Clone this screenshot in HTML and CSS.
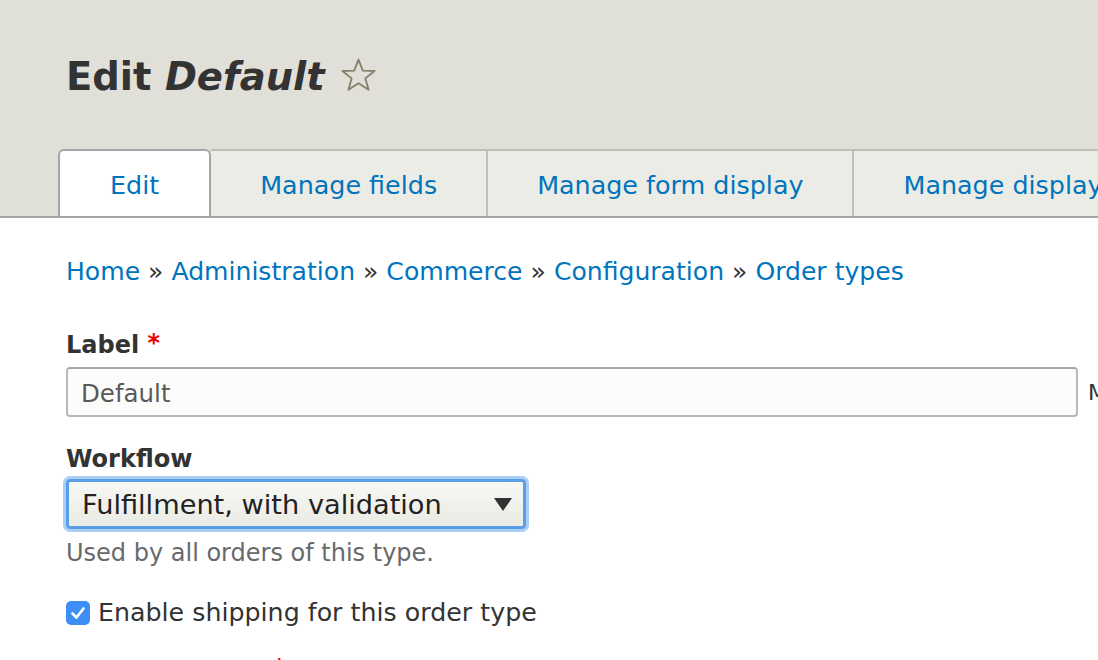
FILE: index.html
```html
<!DOCTYPE html>
<html>
<head>
<meta charset="utf-8">
<link rel="stylesheet" href="styles.css">
</head>
<body>
<div class="header">
  <h1 class="title">Edit <em>Default</em><svg class="star" viewBox="0 0 36 36" width="37" height="37"><path d="M18 2.5 L22.2 13.2 L33.6 13.6 L24.7 20.8 L27.8 31.9 L18 25.6 L8.2 31.9 L11.3 20.8 L2.4 13.6 L13.8 13.2 Z" fill="none" stroke="#868269" stroke-width="1.8" stroke-linejoin="round"/></svg></h1>
  <ul class="tabs">
    <li class="tab active"><a>Edit</a></li>
    <li class="tab"><a>Manage fields</a></li>
    <li class="tab"><a>Manage form display</a></li>
    <li class="tab"><a>Manage display</a></li>
  </ul>
</div>
<div class="content">
  <nav class="breadcrumb"><a>Home</a> » <a>Administration</a> » <a>Commerce</a> » <a>Configuration</a> » <a>Order types</a></nav>
  <div class="field">
    <label class="label">Label <span class="req">*</span></label>
    <div class="input-row">
      <div class="input">Default</div>
      <span class="machine">Machine name: default</span>
    </div>
  </div>
  <div class="field">
    <label class="label">Workflow</label>
    <div class="select">
      <span>Fulfillment, with validation</span>
      <svg class="arrow" viewBox="0 0 18 13" width="18" height="13"><path d="M0 0 H18 L9 13 Z" fill="#333"/></svg>
    </div>
    <div class="desc">Used by all orders of this type.</div>
  </div>
  <div class="check-row">
    <span class="checkbox"><svg viewBox="0 0 24 24" width="24" height="24"><path d="M6.5 12.5 L10.5 16.5 L17.5 7.5" fill="none" stroke="#fff" stroke-width="2.6" stroke-linecap="round" stroke-linejoin="round"/></svg></span>
    <span class="check-label">Enable shipping for this order type</span>
  </div>
  <div class="field last">
    <label class="label">Shipment type <span class="req">*</span></label>
  </div>
</div>
</body>
</html>
```

FILE: styles.css
```css
html, body {
  margin: 0;
  padding: 0;
  background: #fff;
  overflow: hidden;
}
body {
  font-family: "DejaVu Sans", "Liberation Sans", sans-serif;
  color: #333;
  width: 1098px;
  height: 660px;
}
.header {
  background: #e0e0d8;
  padding-top: 52px;
}
.title {
  margin: 0 0 0 66px;
  font-size: 38.5px;
  font-weight: bold;
  color: #333;
  line-height: 48px;
  height: 49px;
  display: flex;
  align-items: center;
  white-space: pre;
}
.title em {
  font-style: italic;
}
.star {
  margin-left: 15px;
  margin-top: -2px;
}
.tabs {
  list-style: none;
  margin: 48px 0 0 0;
  padding: 0 0 0 58px;
  display: flex;
  border-bottom: 2px solid #a6a6a6;
  height: 67px;
  white-space: nowrap;
  overflow: hidden;
}
.tab {
  background: #ececE6;
  border-top: 2px solid #bfbfba;
  border-left: 2px solid #bfbfba;
  display: flex;
  align-items: center;
  padding: 0 49px 0 49px;
  font-size: 25.4px;
  color: #0074bd;
  margin-bottom: -2px;
  flex-shrink: 0;
}
.tab.active + .tab {
  border-left: none;
}
.tab.active {
  background: #fff;
  border: 2px solid #a6a6a6;
  border-bottom: none;
  border-radius: 6px 6px 0 0;
  padding: 0 50px 0 50px;
  height: 69px;
  box-sizing: border-box;
  position: relative;
  z-index: 1;
}
.content {
  padding: 38px 0 0 66px;
}
.breadcrumb {
  font-size: 25.1px;
  color: #333;
  line-height: 32px;
  white-space: nowrap;
}
.breadcrumb a {
  color: #0074bd;
}
.field {
  margin-top: 42px;
}
.label {
  display: block;
  font-weight: bold;
  font-size: 24px;
  line-height: 30px;
  color: #333;
}
.req {
  color: #e00;
  position: relative;
  top: -2px;
}
.input-row {
  display: flex;
  align-items: center;
  margin-top: 7px;
  white-space: nowrap;
}
.input {
  box-sizing: border-box;
  width: 1012px;
  height: 50px;
  border: 2px solid #b8b8b8;
  border-top-color: #a6a6a6;
  border-radius: 4px;
  background: #fcfcfa;
  font-size: 24.5px;
  color: #595959;
  padding: 2px 13px 0;
  display: flex;
  align-items: center;
  flex-shrink: 0;
}
.machine {
  margin-left: 10px;
  font-size: 22px;
  color: #333;
}
.field + .field {
  margin-top: 27px;
}
.select {
  box-sizing: border-box;
  width: 460px;
  height: 50px;
  margin-top: 5px;
  border: 3px solid #5b9ee8;
  border-radius: 4px;
  box-shadow: 0 0 0 3px #a9cff7;
  background: linear-gradient(#f7f7f4, #ebebe5);
  display: flex;
  align-items: center;
  justify-content: space-between;
  padding: 0 11px 0 13px;
  font-size: 27.2px;
  color: #222;
}
.desc {
  margin-top: 9px;
  font-size: 24px;
  color: #68696b;
  line-height: 30px;
}
.check-row {
  margin-top: 30px;
  display: flex;
  align-items: center;
  gap: 8px;
}
.checkbox {
  width: 24px;
  height: 24px;
  border-radius: 5px;
  background: #3d8ff5;
  display: inline-flex;
}
.check-label {
  font-size: 25.3px;
  color: #333;
}
.check-row + .field {
  margin-top: 30px;
}
.last .req {
  top: -4px;
}
```
